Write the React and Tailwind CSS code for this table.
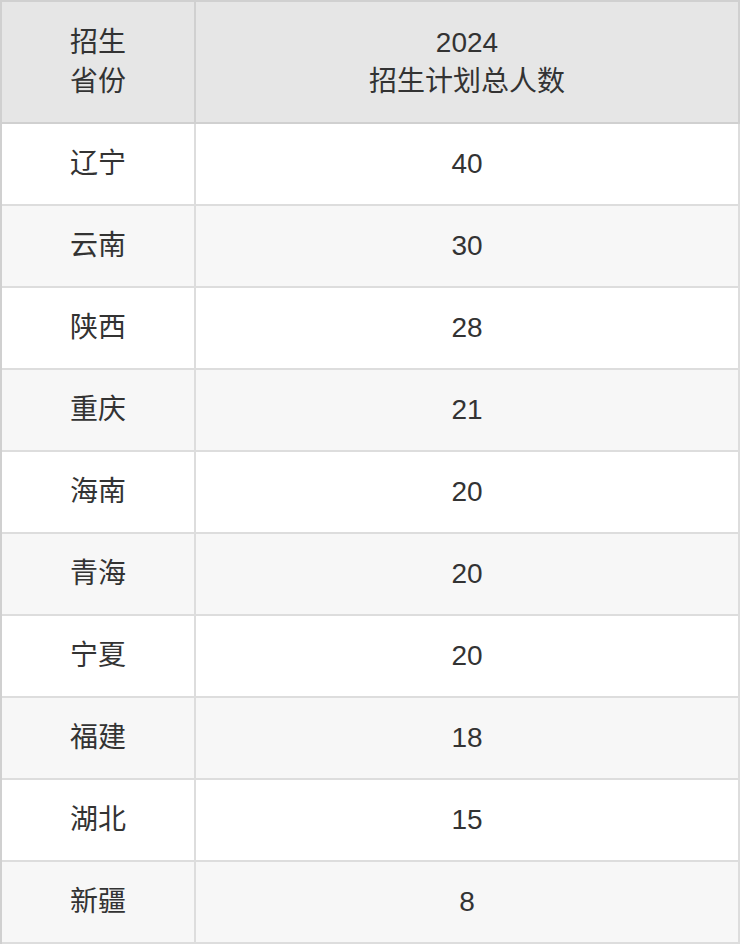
import React from "react";

const rows = [
  ["辽宁", "40"],
  ["云南", "30"],
  ["陕西", "28"],
  ["重庆", "21"],
  ["海南", "20"],
  ["青海", "20"],
  ["宁夏", "20"],
  ["福建", "18"],
  ["湖北", "15"],
  ["新疆", "8"],
];

export default function App() {
  return (
    <div
      className="w-[740px] bg-white text-[#333] text-[28px]"
      style={{ fontFamily: '"Liberation Sans", "Noto Sans CJK SC", sans-serif' }}
    >
      <div className="grid grid-cols-[194px_544px] border-l-2 border-t-2 border-[#d0d0d0]">
        <div className="h-[122px] bg-[#e6e6e6] border-r-2 border-b-2 border-[#d0d0d0] flex items-center justify-center text-center leading-[39px]">
          <div>
            招生
            <br />
            省份
          </div>
        </div>
        <div className="h-[122px] bg-[#e6e6e6] border-r-2 border-b-2 border-[#d0d0d0] flex items-center justify-center text-center leading-[39px]">
          <div>
            2024
            <br />
            招生计划总人数
          </div>
        </div>
        {rows.map(([p, n], i) => (
          <React.Fragment key={p}>
            <div
              className={`h-[82px] border-r-2 border-b-2 border-[#dddddd] flex items-center justify-center ${
                i % 2 === 1 ? "bg-[#f7f7f7]" : "bg-white"
              }`}
            >
              {p}
            </div>
            <div
              className={`h-[82px] border-r-2 border-b-2 border-[#dddddd] flex items-center justify-center ${
                i % 2 === 1 ? "bg-[#f7f7f7]" : "bg-white"
              }`}
            >
              {n}
            </div>
          </React.Fragment>
        ))}
      </div>
    </div>
  );
}
